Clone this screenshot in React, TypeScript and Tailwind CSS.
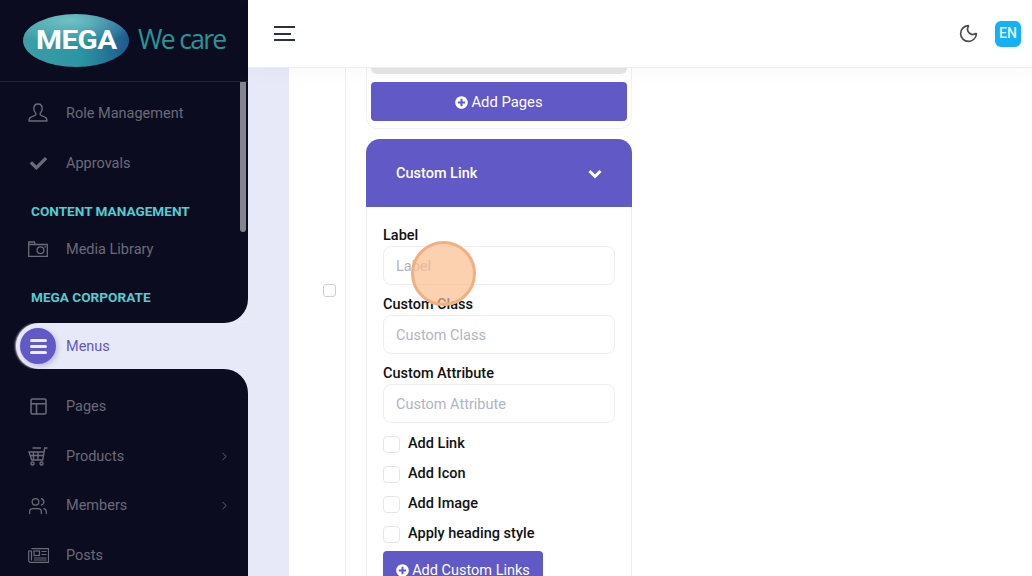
import { Users, Moon, ChevronRight } from "lucide-react";
import { FaCheck, FaPlusCircle } from "react-icons/fa";
import type { ReactNode } from "react";

const font = { fontFamily: 'Roboto, "Liberation Sans", sans-serif' };

function UserIcon() {
  return (
    <svg width="20" height="20" viewBox="0 0 20 20" fill="none" stroke="currentColor" strokeWidth="1.4" strokeLinejoin="round">
      <path d="M10 1c2.7 0 4.2 2 4.2 4.6 0 2-.9 3.6-2 4.6v1.6c0 .7 4.300 1.400 6 3.200.6.700.8 2 .8 3H1c0-1 .2-2.300.8-3 1.700-1.800 6-2.500 6-3.200v-1.600c-1.100-1-2-2.600-2-4.600C5.800 3 7.300 1 10 1z" />
    </svg>
  );
}
function CameraIcon() {
  return (
    <svg width="20" height="16" viewBox="0 0 20 16" fill="none" stroke="currentColor" strokeWidth="1.3">
      <path d="M.7 3.500h18.600v11.800H.7zM.7 3.500V1h5.600l1 2.500" />
      <circle cx="12.500" cy="9.300" r="3.400" />
      <path d="M16.500 5.800h1.500" />
    </svg>
  );
}
function PagesIcon() {
  return (
    <svg width="17" height="17" viewBox="0 0 17 17" fill="none" stroke="currentColor" strokeWidth="1.500">
      <rect x="1" y="1" width="15" height="15" rx="1.500" />
      <path d="M1 5.700h15M6.500 5.700V16" />
    </svg>
  );
}
function CartIcon() {
  return (
    <svg width="20" height="19" viewBox="0 0 20 19" fill="none" stroke="currentColor" strokeWidth="1.400">
      <path d="M19.500 1h-2.800l-2 12H3.800L1 5h15" />
      <path d="M4.500 1h8.500M5.500 5v8M10 5v8M1.800 8.500h13.400" />
      <circle cx="4.500" cy="16.500" r="1.500" />
      <circle cx="13.500" cy="16.500" r="1.500" />
    </svg>
  );
}
function PostsIcon() {
  return (
    <svg width="21" height="15" viewBox="0 0 21 15" fill="none" stroke="currentColor" strokeWidth="1.200">
      <path d="M3.500 .7h17v13.600H2.500C1.400 14.300.7 13.500.7 12.500V3h2.800v9.500" />
      <rect x="6" y="3" width="5.500" height="4.500" />
      <path d="M13.500 3.500h5M13.500 6.500h5M6 10h12.500M6 12h12.500" />
    </svg>
  );
}

function Item({ icon, label, arrow, tall }: { icon: ReactNode; label: string; arrow?: boolean; tall?: boolean }) {
  return (
    <div className={`flex items-center text-[#6b6b77] ${tall ? "h-[50px]" : "h-[49.6px]"}`}>
      <div className="flex w-[66px] shrink-0 items-center justify-center pl-[10px]">{icon}</div>
      <span className={`text-[14.5px] ${tall ? "pt-[2px]" : ""}`}>{label}</span>
      {arrow && <ChevronRight className="ml-auto mr-[17px] shrink-0" size={13} strokeWidth={1.700} />}
    </div>
  );
}

function Heading({ children }: { children: string }) {
  return <div className="mt-3 flex h-[22px] items-center pl-[31px] text-[13.6px] font-bold text-[#52cdd0]">{children}</div>;
}

function Field({ label }: { label: string }) {
  return (
    <div>
      <div className="flex h-[22px] items-center pt-[2px] text-[14.5px] font-medium text-[#111]">{label}</div>
      <input
        readOnly
        placeholder={label}
        className="block h-[39px] w-full rounded-lg border border-[#eeeef1] bg-white px-[12px] pt-[2px] text-[14.5px] outline-none placeholder:text-[#b2b4c4]"
      />
    </div>
  );
}

function Check({ label }: { label: string }) {
  return (
    <div className="flex h-[30px] items-center gap-2">
      <span className="mt-[2px] h-[17px] w-[17px] shrink-0 rounded border border-[#e6e6ea] bg-white" />
      <span className="pt-[2px] text-[14.5px] font-medium text-[#111]">{label}</span>
    </div>
  );
}

export default function App() {
  return (
    <div style={font} className="relative flex h-[576px] w-[1032px] overflow-hidden bg-[#e8e9f8]">
      <aside className="flex h-full w-[248px] shrink-0 flex-col">
        <div className="flex h-[82px] w-[249px] shrink-0 items-center border-b border-[#232336] bg-[#0c0c20] pb-[1px] pl-[23px]">
          <div className="flex h-[53px] w-[106px] items-center justify-center rounded-[50%] bg-[radial-gradient(ellipse_70%_45%_at_45%_12%,rgba(150,215,215,0.65),transparent),linear-gradient(90deg,#3c9ea8,#2b95a3_55%,#1c5a8e)]">
            <span className="scale-x-[1.14] text-[26px] font-bold tracking-[-0.5px] text-white">MEGA</span>
          </div>
          <span className="ml-[9px] text-[26.5px] tracking-[-1.700px] text-[#2a9396]" style={{ fontFamily: '"Open Sans", sans-serif' }}>We care</span>
        </div>

        <div className="relative h-[241px] shrink-0 overflow-hidden rounded-br-[24px] bg-[#0c0c20] pt-[6px]">
          <Item tall icon={<UserIcon />} label="Role Management" />
          <Item tall icon={<FaCheck size={17} />} label="Approvals" />
          <Heading>CONTENT MANAGEMENT</Heading>
          <div className="mt-[2px]">
            <Item tall icon={<CameraIcon />} label="Media Library" />
          </div>
          <Heading>MEGA CORPORATE</Heading>
          <div className="absolute right-[2px] top-0 h-[150px] w-[6px] rounded-b bg-[#85858f]" />
        </div>

        <div className="flex h-[46px] shrink-0 bg-[#0c0c20] pl-4">
          <div className="flex flex-1 items-center rounded-l-full bg-[#e8e9f8] pl-1 shadow-[-1px_0_2px_rgba(255,255,255,0.7)]">
            <div className="flex h-9 w-9 items-center justify-center rounded-full bg-[#6159c6] shadow-[2px_2px_5px_rgba(60,60,120,0.25)]">
              <div className="flex w-[17px] flex-col gap-[3px]">
                <span className="h-[3px] rounded-sm bg-[#eeeefc]" />
                <span className="h-[3px] rounded-sm bg-[#eeeefc]" />
                <span className="h-[3px] rounded-sm bg-[#eeeefc]" />
              </div>
            </div>
            <span className="ml-[10px] mt-[1px] text-[14.5px] text-[#6159b8]">Menus</span>
          </div>
        </div>

        <div className="flex-1 overflow-hidden rounded-tr-[24px] bg-[#0c0c20] pt-[13px]">
          <Item icon={<PagesIcon />} label="Pages" />
          <Item icon={<CartIcon />} label="Products" arrow />
          <Item icon={<Users size={20} strokeWidth={1.500} />} label="Members" arrow />
          <Item icon={<PostsIcon />} label="Posts" />
        </div>
      </aside>

      <main className="flex h-full min-w-0 flex-1 flex-col">
        <header className="relative z-10 flex h-[68px] shrink-0 items-center border-b border-[#eeeef2] bg-white pl-[26px] pr-[11px] shadow-[0_6px_18px_rgba(0,0,0,0.025)]">
          <div className="flex w-[21px] flex-col gap-[4.500px]">
            <span className="h-[2px] w-[21px] bg-[#2c3040]" />
            <span className="h-[2px] w-[17px] bg-[#2c3040]" />
            <span className="h-[2px] w-[21px] bg-[#2c3040]" />
          </div>
          <Moon className="ml-auto text-[#4a4a50]" size={21} strokeWidth={1.900} />
          <div className="ml-[16px] flex h-[26px] w-[26px] items-center justify-center rounded-md bg-[#14b1f5] text-[14px] font-medium text-[#dff5ff]">EN</div>
        </header>

        <div className="flex min-h-0 flex-1">
          <div className="w-[41px] shrink-0 bg-[#e8e9f8]" />
          <div className="flex min-w-0 flex-1 bg-white">
            <div className="flex w-[56px] shrink-0 justify-end pr-[9px] pt-[216px]">
              <span className="h-[13px] w-[13px] rounded-[3px] border border-[#cfcfd4] bg-white" />
            </div>
            <div className="w-[287px] shrink-0 border-l border-[#eeeef2] pl-[20px]">
              <div className="w-[266px] rounded-b-xl border-x border-b border-[#f1f1f4] px-[4px] pb-[7px]">
                <div className="h-[6px] rounded-b-xl bg-[#e5e5e5]" />
                <div className="mt-[8px] flex h-[39px] items-center justify-center gap-[3px] rounded-sm bg-[#6159c6] pt-[1px] text-[14.800px] text-white">
                  <FaPlusCircle size={13} />
                  Add Pages
                </div>
              </div>
              <div className="mt-[10px] w-[266px]">
                <div className="flex h-[68px] items-center justify-between rounded-t-[14px] bg-[#6159c6] px-[30px] pt-[2px] text-[14.500px] font-medium text-white">
                  Custom Link
                  <svg width="14" height="10" viewBox="0 0 14 10" fill="none" stroke="currentColor" strokeWidth="3">
                    <path d="M1.500 2l5.500 5.500L12.500 2" />
                  </svg>
                </div>
                <div className="border-x border-[#eeeef2] px-[16px] pt-[17px]">
                  <div className="flex flex-col gap-2">
                    <Field label="Label" />
                    <Field label="Custom Class" />
                    <Field label="Custom Attribute" />
                  </div>
                  <div className="mt-[5px]">
                    <Check label="Add Link" />
                    <Check label="Add Icon" />
                    <Check label="Add Image" />
                    <Check label="Apply heading style" />
                  </div>
                  <div className="mt-[3px] flex h-[39px] w-[160px] items-center justify-center gap-[3px] rounded-sm bg-[#6159c6] text-[14.500px] text-white">
                    <FaPlusCircle size={13} />
                    Add Custom Links
                  </div>
                </div>
              </div>
            </div>
          </div>
        </div>
      </main>

      <div className="absolute left-[411px] top-[241px] h-[65px] w-[65px] rounded-full border-[3px] border-[#f0b080] bg-[#f9bd8d]/70" />
    </div>
  );
}
